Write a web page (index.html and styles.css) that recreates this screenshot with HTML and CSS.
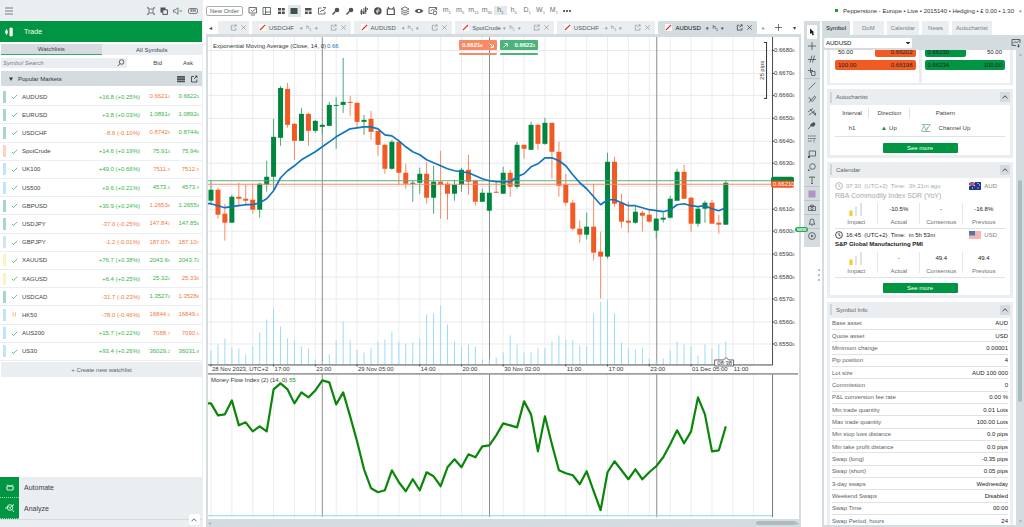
FILE: index.html
```html
<!DOCTYPE html>
<html lang="en">
<head>
<meta charset="utf-8">
<title>Trade</title>
<link rel="stylesheet" href="styles.css">
</head>
<body>
<svg class="defs" aria-hidden="true">
  <symbol id="check" viewBox="0 0 8 8"><path d="M1 4.500L3 6.300L7.200 2" class="st"/></symbol>
  <symbol id="pause" viewBox="0 0 8 8"><path d="M2.500 1.500v5M5 1.500v5" class="st"/></symbol>
  <symbol id="popout" viewBox="0 0 8 8"><path d="M4 1.500H1.500V7H6.800V4.500M5 1h2v2M7 1L4 4" class="st"/></symbol>
  <symbol id="close" viewBox="0 0 8 8"><path d="M1.500 1.500L6.500 6.500M6.500 1.500L1.500 6.500" class="st"/></symbol>
  <symbol id="noline" viewBox="0 0 8 8"><rect width="8" height="8" fill="#fff"/><path d="M1 7L7 1" stroke="#e8321e" stroke-width="1.600"/></symbol>
  <symbol id="up" viewBox="0 0 8 8"><path d="M1.500 5.200L4 2.800L6.500 5.200" class="st"/></symbol>
  <symbol id="clock" viewBox="0 0 8 8"><circle cx="4" cy="4" r="3.400" class="st"/><path d="M4 2v2.200L5.600 5" class="st"/></symbol>
  <symbol id="zoomglass" viewBox="0 0 10 10"><circle cx="6" cy="4" r="2.300" fill="currentColor"/><path d="M4.400 5.600L1.500 8.500" stroke="currentColor" stroke-width="1.400"/></symbol>
  <symbol id="impact" viewBox="0 0 14 14"><path d="M.500 8.500h3V14h-3z" fill="#fbc81e"/><path d="M6 4.500h2V14H6zM11 1h2v13h-2z" fill="#dfe2e4"/></symbol>
</svg>
<div class="app">
  <aside class="sidebar">
    <header class="side-head">
      <button class="icon-btn" aria-label="Menu"><svg class="i10" viewBox="0 0 10 10"><path d="M1 2h8M1 5h8M1 8h8" class="st"/></svg></button>
      <span class="grow"></span>
      <button class="icon-btn" aria-label="Fullscreen"><svg class="i8" viewBox="0 0 8 8"><path d="M2 2h4v4H2zM.500 .500L2 2M7.500 .500L6 2M.500 7.500L2 6M7.500 7.500L6 6M0 2V0h2M6 0h2v2M0 6v2h2M6 8h2V6" class="st"/></svg></button>
      <button class="icon-btn" aria-label="Windows"><svg class="i8" viewBox="0 0 8 8"><path d="M.500 .500h5v5h-5z" fill="#4a5254"/><path d="M2.800 2.800h4.600v4.600H2.800z" fill="#eceff1" stroke="#4a5254"/></svg></button>
      <button class="icon-btn" aria-label="Sound"><svg class="i10" viewBox="0 0 10 8"><path d="M.500 3H2L5 .800V7.200L2 5H.500z" class="st"/><path d="M6.500 3h2.500v2H6.500z" fill="#7fcf9c"/></svg></button>
      <button class="lang">EN</button>
    </header>
    <div class="trade"><svg class="i10" viewBox="0 0 10 10"><path d="M2.500 2v6M7 0v10" stroke="#fff" stroke-width=".800"/><path d="M1.200 3.500h2.600v3H1.200zM5.500 1h3.200v8H5.500z" fill="#fff"/></svg><span>Trade</span></div>
    <div class="seg"><button class="on">Watchlists</button><button>All Symbols</button></div>
    <div class="search-row">
      <label class="search"><input type="text" placeholder="Symbol Search" aria-label="Symbol Search"><svg class="i8" viewBox="0 0 8 8"><circle cx="4.600" cy="3" r="2.300" class="st"/><path d="M3 4.600L.800 7.200" class="st"/></svg></label>
      <span class="bid">Bid</span><span class="ask">Ask</span>
    </div>
    <div class="group"><svg class="tri" viewBox="0 0 4 4"><path d="M0 .500h4L2 4z" fill="currentColor"/></svg><span>Popular Markets</span><span class="grow"></span>
      <svg class="i8" viewBox="0 0 8 8"><path d="M0 1h8v1.700H0zM0 3.300h8V5H0zM0 5.600h8v1.700H0z" fill="#4a5254"/></svg>
      <svg class="i8"><use href="#popout"/></svg></div>
    <ul class="symbols">
      <li><i class="bar fx"></i><svg class="ok"><use href="#check"/></svg><b>AUDUSD</b><span class="chg u">+16.8 (+0.25%)</span><span class="q d">0.6621<small>0</small></span><span class="q u">0.6622<small>3</small></span></li>
      <li><i class="bar fx"></i><svg class="ok"><use href="#check"/></svg><b>EURUSD</b><span class="chg u">+3.8 (+0.03%)</span><span class="q u">1.0891<small>4</small></span><span class="q u">1.0892<small>6</small></span></li>
      <li><i class="bar fx"></i><svg class="ok"><use href="#check"/></svg><b>USDCHF</b><span class="chg d">-8.6 (-0.10%)</span><span class="q d">0.8742<small>9</small></span><span class="q u">0.8744<small>4</small></span></li>
      <li><i class="bar oil"></i><svg class="ok"><use href="#check"/></svg><b>SpotCrude</b><span class="chg u">+14.6 (+0.19%)</span><span class="q u">75.91<small>3</small></span><span class="q u">75.94<small>3</small></span></li>
      <li><i class="bar idx"></i><svg class="ok"><use href="#check"/></svg><b>UK100</b><span class="chg u">+49.0 (+0.66%)</span><span class="q d">7511.<small>9</small></span><span class="q d">7512.<small>9</small></span></li>
      <li><i class="bar idx"></i><svg class="ok"><use href="#check"/></svg><b>US500</b><span class="chg u">+9.6 (+0.21%)</span><span class="q u">4573.<small>5</small></span><span class="q u">4573.<small>9</small></span></li>
      <li><i class="bar fx"></i><svg class="ok"><use href="#check"/></svg><b>GBPUSD</b><span class="chg u">+30.9 (+0.24%)</span><span class="q d">1.2653<small>6</small></span><span class="q u">1.2655<small>3</small></span></li>
      <li><i class="bar fx"></i><svg class="ok"><use href="#check"/></svg><b>USDJPY</b><span class="chg d">-37.0 (-0.25%)</span><span class="q d">147.84<small>1</small></span><span class="q u">147.85<small>6</small></span></li>
      <li><i class="bar cross"></i><svg class="ok"><use href="#check"/></svg><b>GBPJPY</b><span class="chg d">-1.2 (-0.01%)</span><span class="q d">187.07<small>8</small></span><span class="q d">187.10<small>7</small></span></li>
      <li><i class="bar metal"></i><svg class="ok"><use href="#check"/></svg><b>XAUUSD</b><span class="chg u">+76.7 (+0.38%)</span><span class="q u">2043.6<small>9</small></span><span class="q u">2043.7<small>4</small></span></li>
      <li><i class="bar metal"></i><svg class="ok"><use href="#check"/></svg><b>XAGUSD</b><span class="chg u">+6.4 (+0.25%)</span><span class="q u">25.32<small>2</small></span><span class="q d">25.33<small>8</small></span></li>
      <li><i class="bar fx"></i><svg class="ok"><use href="#check"/></svg><b>USDCAD</b><span class="chg d">-31.7 (-0.23%)</span><span class="q u">1.3527<small>0</small></span><span class="q d">1.3528<small>8</small></span></li>
      <li><i class="bar idx"></i><svg class="ok wait"><use href="#pause"/></svg><b>HK50</b><span class="chg d">-78.0 (-0.46%)</span><span class="q d">16844.<small>5</small></span><span class="q d">16849.<small>5</small></span></li>
      <li><i class="bar idx"></i><svg class="ok"><use href="#check"/></svg><b>AUS200</b><span class="chg u">+15.7 (+0.22%)</span><span class="q d">7088.<small>7</small></span><span class="q d">7090.<small>5</small></span></li>
      <li><i class="bar idx"></i><svg class="ok"><use href="#check"/></svg><b>US30</b><span class="chg u">+93.4 (+0.26%)</span><span class="q u">36029.<small>2</small></span><span class="q u">36031.<small>8</small></span></li>
    </ul>
    <button class="create">+ Create new watchlist</button>
    <nav class="side-nav">
      <a href="#automate"><span class="sq"><svg class="i8" viewBox="0 0 8 8"><path d="M1 1.500L2.500 3h3L7 1.500M1 3h6v4H1zM0 4v2M8 4v2" class="st"/></svg></span>Automate</a>
      <a href="#analyze"><span class="sq"><svg class="i10" viewBox="0 0 10 10"><circle cx="5" cy="4.500" r="2.800" class="st"/><path d="M7 6.500L9 9M0 5h1.500L3.500 3.500 5 5.500 6.500 3 9 1.500" class="st"/></svg></span>Analyze</a>
      <div class="nav-tail"><button class="collapse" aria-label="Expand"><svg class="i8"><use href="#up"/></svg></button></div>
    </nav>
  </aside>

  <div class="main">
    <header class="topbar">
      <button class="new-order">New Order</button>
      <div class="tools">
        <button aria-label="Monitor"><svg class="i10" viewBox="0 0 10 10"><path d="M1 1.500h7.500v5.500H1zM3 9h4M3 4l1.500 1.500L8 2.500" class="st"/></svg></button>
        <button aria-label="Panels"><svg class="i10" viewBox="0 0 10 10"><path d="M1 1.500h7.500v7H1zM3.500 1.500v7M3.500 6h5" class="st"/></svg></button>
        <button aria-label="Grid"><svg class="i10" viewBox="0 0 10 10"><path d="M2 2h3v2.500H2zM5.800 2h3v2.500h-3zM2 5.500h3V8H2zM5.800 5.500h3V8h-3z" fill="currentColor"/></svg></button>
        <button class="on" aria-label="Single"><svg class="i10" viewBox="0 0 10 10"><path d="M1.500 2h7v6h-7z" fill="#3f5148"/></svg></button>
        <button aria-label="Mixed grid"><svg class="i10" viewBox="0 0 10 10"><path d="M2 2h6.500v2.500H2zM2 5.500h2.800V8H2zM5.800 5.500h2.800V8H5.800z" fill="currentColor"/></svg></button>
        <button aria-label="Link charts"><svg class="i10" viewBox="0 0 10 10"><path d="M4.500 2H1.500v6H8V5.500M3 6l2-2 1 1L8.500 2M6 1.500h3" class="st"/></svg></button>
        <button aria-label="Zoom in"><svg class="i10"><use href="#zoomglass"/></svg></button>
        <button aria-label="Zoom out"><svg class="i10"><use href="#zoomglass"/></svg></button>
        <button aria-label="Chart type"><svg class="i10" viewBox="0 0 10 10"><path d="M1.500 4.500h2V8h-2zM4 5.500h1.500V8H4zM5.800 1.500h1.700V6H5.800z" fill="currentColor"/><path d="M2.500 3v6M4.800 2v6M6.600 .500V8M8.500 2v2" class="st"/></svg></button>
        <button aria-label="Indicators"><svg class="i10" viewBox="0 0 10 10"><circle cx="4.800" cy="5" r="3.800" fill="currentColor"/><path d="M5 7.500c-2-1-1-4 1-4.500M3.500 5h3" stroke="#fff" fill="none"/></svg></button>
        <button aria-label="Robots"><svg class="i10" viewBox="0 0 10 10"><path d="M2 1L3.500 3h3L8 1M1.300 3h7v5.500h-7z" class="st thick"/></svg></button>
        <button aria-label="Layers"><svg class="i10" viewBox="0 0 10 10"><path d="M5 .800L9 3 5 5 1 3zM1 5l4 2 4-2M1 7l4 2 4-2" class="st"/></svg></button>
        <button aria-label="View"><svg class="i10" viewBox="0 0 10 10"><path d="M.500 5Q5 .500 9.500 5 5 9.500.500 5z" fill="currentColor"/><circle cx="5" cy="5" r="1.300" fill="#fff"/></svg></button>
        <button aria-label="Chart settings"><svg class="i10" viewBox="0 0 10 10"><path d="M8.500 4V1.500H1v6h3.500M2.500 5l2-1.500L6 4.500l2.500-3" class="st"/><circle cx="7" cy="7" r="1.800" class="st"/></svg></button>
      </div>
      <div class="frames">
        <button>m<sub>1</sub></button><button>m<sub>5</sub></button><button>m<sub>15</sub></button><button>m<sub>30</sub></button><button class="on">h<sub>1</sub></button><button>h<sub>4</sub></button><button>D<sub>1</sub></button><button>W<sub>1</sub></button><button>M<sub>1</sub></button><button class="dots" aria-label="More"><svg viewBox="0 0 8 2"><circle cx="1" cy="1" r="1"/><circle cx="4" cy="1" r="1"/><circle cx="7" cy="1" r="1"/></svg></button>
      </div>
      <span class="grow"></span>
      <div class="account"><i></i><span>Pepperstone - Europe • Live • 2015140 • Hedging • £ 0.00 • 1:30</span><em>▾</em></div>
    </header>

    <div class="body">
      <section class="center">
        <div class="tabs">
          <button class="nav-arrow" aria-label="Previous tabs">◂</button>
          <div class="tab part"><svg class="i7"><use href="#popout"/></svg><svg class="i7"><use href="#close"/></svg></div>
          <div class="tab-grid">
            <div class="tab"><svg class="i7"><use href="#noline"/></svg><span class="nm">USDCHF</span><em>▾</em><span class="tf">h<sub>1</sub></span><em>▾</em><span class="grow"></span><svg class="i7"><use href="#popout"/></svg><svg class="i7"><use href="#close"/></svg></div>
            <div class="tab"><svg class="i7"><use href="#noline"/></svg><span class="nm">AUDUSD</span><em>▾</em><span class="tf">h<sub>1</sub></span><em>▾</em><span class="grow"></span><svg class="i7"><use href="#popout"/></svg><svg class="i7"><use href="#close"/></svg></div>
            <div class="tab"><svg class="i7"><use href="#noline"/></svg><span class="nm">SpotCrude</span><em>▾</em><span class="tf">h<sub>1</sub></span><em>▾</em><span class="grow"></span><svg class="i7"><use href="#popout"/></svg><svg class="i7"><use href="#close"/></svg></div>
            <div class="tab"><svg class="i7"><use href="#noline"/></svg><span class="nm">USDCHF</span><em>▾</em><span class="tf">h<sub>1</sub></span><em>▾</em><span class="grow"></span><svg class="i7"><use href="#popout"/></svg><svg class="i7"><use href="#close"/></svg></div>
            <div class="tab on"><svg class="i7"><use href="#noline"/></svg><span class="nm">AUDUSD</span><em>▾</em><span class="tf">h<sub>1</sub></span><em>▾</em><span class="grow"></span><svg class="i7"><use href="#popout"/></svg><svg class="i7"><use href="#close"/></svg></div>
          </div>
          <div class="tab-end"><span class="dim">▸</span><svg class="i7" viewBox="0 0 8 8"><path d="M4 0v8M0 4h8" class="st"/></svg><span>▾</span></div>
        </div>
        <div class="frame">
          <div class="chart">
            <svg id="chart" viewBox="208 37 592 482" preserveAspectRatio="xMinYMin meet" role="img" aria-label="AUDUSD h1 chart"></svg>
            <div class="quotes">
              <button class="sell"><span>0.6621<small>0</small></span><svg class="i6" viewBox="0 0 8 8"><path d="M1 1L6 6M7 2.500V7H2.500" stroke="#fff" stroke-width="1.600" fill="none"/></svg></button>
              <button class="buy"><svg class="i6" viewBox="0 0 8 8"><path d="M1 7L6 2M2.500 1H7V5.500" stroke="#fff" stroke-width="1.600" fill="none"/></svg><span>0.6622<small>3</small></span></button>
              <i class="sell-bar"></i><i class="buy-bar"></i>
            </div>
          </div>
          <div class="hscroll"><span>◂</span><span class="grow"></span><i></i><span>▸</span></div>
        </div>
      </section>

      <div class="rail">
        <div class="rail-tools">
          <button class="on" aria-label="Cursor"><svg class="i8" viewBox="0 0 8 8"><path d="M2 .500V6l1.400-1L4.600 7.500 6 6.800 4.800 4.500H6.500z" fill="#222"/></svg></button>
          <button aria-label="Crosshair"><svg class="i8" viewBox="0 0 8 8"><path d="M4 0v8M0 4h8" class="st"/></svg></button>
          <button aria-label="Crosshair lines"><svg class="i8" viewBox="0 0 8 8"><path d="M0 4.500h8M2 7.500L4 .500M4.500 7.500L6.500 .500" class="st"/></svg></button>
          <button aria-label="Measure"><svg class="i8" viewBox="0 0 8 8"><path d="M2.500 0v5M0 2.500h5M3.500 3.500h3.500v4H3.500z" class="st"/></svg></button>
          <button class="sep" aria-label="Line"><svg class="i8" viewBox="0 0 8 8"><path d="M.500 7.500L7.500 .500" class="st"/></svg></button>
          <button aria-label="Pencil"><svg class="i8" viewBox="0 0 8 8"><path d="M.500 3Q2 2 2.500 4T1 7.500M3 5.500L6.500 1 7.800 2.200 4.500 6.500z" class="st"/></svg></button>
          <button aria-label="Fibonacci"><svg class="i8" viewBox="0 0 8 8"><path d="M0 4L5 .500M1 7L7 2.500M2 1l5 6M5 5h2.500v2.500" class="st"/></svg></button>
          <button aria-label="Shapes"><svg class="i8" viewBox="0 0 8 8"><path d="M3.500 2.500L6 1 7.500 3 6 5.500H3L2 4z" class="fl"/><path d="M0 8L3 5" class="st"/></svg></button>
          <button class="tall" aria-label="Levels"><svg class="i8" viewBox="0 0 8 8"><path d="M0 1h8M0 3.500h8M0 6h4M6 4.500v3" class="st" stroke-dasharray="1.500 .600"/></svg></button>
          <button aria-label="Rectangle"><svg class="i8" viewBox="0 0 8 8"><path d="M1.200 1h6.300v5H1.200z" class="st"/><path d="M0 6h2v2H0z" class="fl"/></svg></button>
          <button aria-label="Ellipse"><svg class="i8" viewBox="0 0 8 8"><circle cx="4.500" cy="3.500" r="2.800" class="st"/><path d="M0 6.500h1.500V8H0z" class="fl"/></svg></button>
          <button aria-label="Text"><svg class="i8" viewBox="0 0 8 8"><path d="M1.500 2V1h5v1M4 1v6.500M3 7.500h2" class="st"/></svg></button>
          <button class="sep" aria-label="Colour"><svg class="i8" viewBox="0 0 8 8"><path d="M.500 .500h7v7h-7z" fill="#b094c4"/></svg></button>
          <button class="sep" aria-label="Snapshot"><svg class="i8" viewBox="0 0 8 8"><path d="M.500 2.500h7v4h-7zM2.500 2.500V1.200h3v1.300" class="st"/><circle cx="4" cy="4.500" r="1.200" class="st"/></svg></button>
          <button class="sep" aria-label="Alerts"><svg class="i8" viewBox="0 0 8 8"><path d="M1 6.200h6L6 5V3Q6 1 4 1T2 3v2zM3.300 7.300h1.400" class="st"/></svg></button>
          <button class="sep" aria-label="Replay"><svg class="i8" viewBox="0 0 8 8"><circle cx="4" cy="4" r="3.400" class="st"/><path d="M3.200 2.500L5.600 4 3.200 5.500z" class="fl"/></svg><span class="new">NEW</span></button>
        </div>
        <div class="grip"><i></i><i></i><i></i></div>
      </div>

      <aside class="panel">
        <div class="ptabs"><button class="on">Symbol</button><button>DoM</button><button>Calendar</button><button>News</button><button>Autochartist</button></div>
        <div class="pbody">
          <div class="picker"><select aria-label="Symbol"><option>AUDUSD</option></select><span class="grow"></span><svg class="i10" viewBox="0 0 10 10"><path d="M1 1.500h8V5M1 1.500v6h4M2 5.500l2-2L5.500 5 8 2.500M7.500 6v3M6.200 7.800L7.500 9 8.800 7.800" class="st"/></svg></div>
          <div class="scroller">
            <div class="cards">
              <section class="card depth">
                <div class="side sell-side"><p class="half"><span>50.00</span><span class="fill">0.66202</span></p><p class="full"><span>100.00</span><span>0.66198</span></p></div>
                <div class="side buy-side"><p class="half"><span class="fill">0.66230</span><span>50.00</span></p><p class="full"><span>0.66234</span><span>100.00</span></p></div>
              </section>
              <section class="card">
                <h2>Autochartist<button aria-label="Collapse"><svg class="i8"><use href="#up"/></svg></button></h2>
                <div class="inner">
                  <table class="auto">
                    <thead><tr><th>Interval</th><th>Direction</th><th>Pattern</th></tr></thead>
                    <tbody><tr><td>h1</td><td><svg class="tri-up" viewBox="0 0 4 4"><path d="M0 4h4L2 .500z" fill="currentColor"/></svg>Up</td><td><svg class="pat" viewBox="0 0 10 8"><path d="M.500 .500h9M.500 7.500h9" stroke="#7cc98f"/><path d="M.500 7L3 1.500 5 6.500 9 1M5 6.500L7 3" class="st"/></svg>Channel Up</td></tr></tbody>
                  </table>
                  <button class="more">See more</button>
                </div>
              </section>
              <section class="card cal">
                <h2>Calendar<button aria-label="Collapse"><svg class="i8"><use href="#up"/></svg></button></h2>
                <div class="inner">
                  <article class="event past">
                    <p class="when"><svg class="i8"><use href="#clock"/></svg><span>07:30 &nbsp;(UTC+2)&nbsp; Time: &nbsp;3h 21m ago</span><span class="grow"></span><svg class="flag" viewBox="0 0 12 8"><path d="M0 0h12v8H0z" fill="#233a8c"/><path d="M0 0l6 4M6 0L0 4" stroke="#fff"/><path d="M3 0v4M0 2h6" stroke="#e0303a" stroke-width="1.200"/><path d="M8.500 1.500h1M10 3h1M8.500 6h1M3 6h1" stroke="#fff"/></svg><span class="cur">AUD</span></p>
                    <p class="title">RBA Commodity Index SDR (YoY)</p>
                    <dl><div><dd><svg class="imp"><use href="#impact"/></svg></dd><dt>Impact</dt></div><div><dd>-10.5%</dd><dt>Actual</dt></div><div><dd>-</dd><dt>Consensus</dt></div><div><dd>-16.8%</dd><dt>Previous</dt></div></dl>
                  </article>
                  <article class="event">
                    <p class="when"><svg class="i8"><use href="#clock"/></svg><span>16:45 &nbsp;(UTC+2)&nbsp; Time: &nbsp;in 5h 53m</span><span class="grow"></span><svg class="flag" viewBox="0 0 12 8"><path d="M0 0h12v8H0z" fill="#fbe0de"/><path d="M0 1h12M0 3h12M0 5h12M0 7h12" stroke="#f08a86"/><path d="M0 0h6v4.500H0z" fill="#5573a8"/></svg><span class="cur">USD</span></p>
                    <p class="title">S&amp;P Global Manufacturing PMI</p>
                    <dl><div><dd><svg class="imp"><use href="#impact"/></svg></dd><dt>Impact</dt></div><div><dd>-</dd><dt>Actual</dt></div><div><dd>49.4</dd><dt>Consensus</dt></div><div><dd>49.4</dd><dt>Previous</dt></div></dl>
                  </article>
                  <button class="more">See more</button>
                </div>
              </section>
              <section class="card">
                <h2>Symbol Info<button aria-label="Collapse"><svg class="i8"><use href="#up"/></svg></button></h2>
                <ul class="inner info">
                  <li><span>Base asset</span><b>AUD</b></li>
                  <li><span>Quote asset</span><b>USD</b></li>
                  <li><span>Minimum change</span><b>0.00001</b></li>
                  <li><span>Pip position</span><b>4</b></li>
                  <li><span>Lot size</span><b>AUD 100 000</b></li>
                  <li><span>Commission</span><b>0</b></li>
                  <li><span>P&amp;L conversion fee rate</span><b>0.00 %</b></li>
                  <li><span>Min trade quantity</span><b>0.01 Lots</b></li>
                  <li><span>Max trade quantity</span><b>100.00 Lots</b></li>
                  <li><span>Min stop loss distance</span><b>0.0 pips</b></li>
                  <li><span>Min take profit distance</span><b>0.0 pips</b></li>
                  <li><span>Swap (long)</span><b>-0.35 pips</b></li>
                  <li><span>Swap (short)</span><b>0.05 pips</b></li>
                  <li><span>3-day swaps</span><b>Wednesday</b></li>
                  <li><span>Weekend Swaps</span><b>Disabled</b></li>
                  <li><span>Swap Time</span><b>00:00</b></li>
                  <li><span>Swap Period, hours</span><b>24</b></li>
                </ul>
              </section>
            </div>
            <div class="vscroll"><span>▴</span><i></i><span>▾</span></div>
          </div>
        </div>
      </aside>
    </div>
  </div>
</div>
<script src="chart.js"></script>
</body>
</html>
```
FILE: styles.css
```css
* { box-sizing: border-box; }
body { margin: 0; background: #fff; color: #3c4244; font: 6px/8px "Liberation Sans", Arial, sans-serif; overflow: hidden; }
button, input, select { font: inherit; color: inherit; margin: 0; padding: 0; border: 0; background: none; }
p, h2, ul, dl, dd { margin: 0; padding: 0; }
ul { list-style: none; }
a { color: inherit; text-decoration: none; }
em, i { font-style: normal; }
small { font-size: 4px; }
svg { display: block; flex: none; }
.st { fill: none; stroke: currentColor; stroke-width: .8; }
.thick { stroke-width: 1.2; }
.fl { fill: currentColor; }
.defs { position: absolute; width: 0; height: 0; }
.grow { flex: 1; }
.i6 { width: 5px; height: 5px; }
.i7 { width: 7px; height: 7px; }
.i8 { width: 8px; height: 8px; }
.i10 { width: 10px; height: 10px; }
.app { display: flex; height: 100vh; }

/* sidebar */
.sidebar { width: 202px; flex: none; display: flex; flex-direction: column; }
.side-head { height: 21px; flex: none; display: flex; align-items: center; gap: 5px; padding: 0 4px; background: #eaeef1; color: #5a6265; }
.lang { width: 10px; height: 6px; border: 1px solid #7b8386; border-radius: 2px; font-size: 4px; line-height: 4px; font-weight: bold; }
.trade { height: 21px; flex: none; display: flex; align-items: center; gap: 10px; padding-left: 4px; background: #009542; color: #fff; font-size: 7px; }
.seg { display: grid; grid-template-columns: 1fr 1fr; height: 11px; flex: none; margin: 2px 0 2px 1px; background: #eaeef1; }
.seg .on { background: #d4dcdf; border-bottom: 1px solid #3aa96a; }
.search-row { display: flex; align-items: center; height: 11px; flex: none; padding-left: 1px; }
.search { display: flex; align-items: center; width: 126px; height: 10px; padding: 0 2px; background: #eaeef1; }
.search input { flex: 1; min-width: 0; font-style: italic; }
.search input::placeholder { color: #777f82; }
.bid { width: 35px; text-align: right; }
.ask { width: 31px; text-align: right; }
.group { display: flex; align-items: center; gap: 5px; height: 15px; flex: none; margin: 3px 0 2px 1px; padding: 0 4px 0 8px; background: #d4dcdf; color: #2f3537; }
.tri { width: 4px; height: 4px; }
.symbols { display: grid; grid-auto-rows: 1fr; height: 273px; flex: none; }
.symbols li { display: grid; grid-template-columns: 8px 11px 40px 1fr 30px 29px; align-items: center; padding: 0 3px; border-bottom: 1px solid #eceff0; }
.symbols b { font-weight: normal; }
.bar { width: 3px; height: 12px; }
.fx { background: #a5d6cc; }
.oil { background: #ffd2bd; }
.idx { background: #bfe4fb; }
.cross { background: #d3e2f4; }
.metal { background: #fcf1bf; }
.ok { width: 7px; height: 7px; color: #1fa85a; }
.wait { color: #f5a03c; }
.chg, .q { text-align: right; }
.u { color: #39b54a; }
.d { color: #f47a3c; }
.create { height: 15px; flex: none; margin: 1px 0 0 1px; background: #eaeef1; color: #5a6265; }
.side-nav { margin-top: auto; background: #eaeef1; font-size: 7px; }
.side-nav a { display: flex; align-items: center; gap: 5px; height: 21px; }
.sq { display: flex; align-items: center; justify-content: center; width: 19px; height: 21px; background: #009542; color: #fff; border-bottom: 1px dotted #9fd7b6; }
.nav-tail { position: relative; height: 8px; border-top: 1px solid #d4dcdf; }
.collapse { position: absolute; right: 2px; top: -6px; width: 11px; height: 11px; padding: 1px; background: #fff; border-radius: 2px; }

/* top bar */
.main { flex: 1; min-width: 0; display: flex; flex-direction: column; padding-left: 3px; border-left: 1px solid #eef1f2; }
.topbar { display: flex; align-items: center; height: 21px; flex: none; }
.new-order { width: 37px; height: 10px; border: 1px solid #a9b0b3; border-radius: 2px; color: #5a6265; line-height: 8px; }
.tools { display: grid; grid-template-columns: repeat(14, 1fr); width: 194px; margin-left: 3px; color: #4a5254; }
.tools button { display: flex; align-items: center; justify-content: center; height: 12px; }
.tools .on { background: #dfe5e8; }
.frames { display: grid; grid-template-columns: repeat(10, 1fr); width: 134px; color: #6a7275; font-size: 7px; }
.frames .on { background: #e3e8ea; }
.frames .dots { display: flex; align-items: center; justify-content: center; }
.dots svg { width: 8px; height: 2px; fill: #2f3537; }
sub { font-size: 4px; line-height: 4px; vertical-align: -2px; }
.account { display: flex; align-items: center; gap: 5px; padding-right: 2px; color: #2f3537; }
.account i { width: 3px; height: 3px; background: #1c9a2e; }
.account em { font-size: 5px; color: #8a9295; }

/* chart area */
.body { flex: 1; min-height: 0; display: flex; }
.center { flex: 1; min-width: 0; display: flex; flex-direction: column; }
.tabs { display: flex; height: 13px; flex: none; padding-right: 2px; }
.nav-arrow { width: 9px; }
.tab { display: flex; align-items: center; gap: 3px; padding: 0 4px 0 7px; background: #eaeef1; color: #8a9295; border-radius: 1px; }
.tab.part { width: 31px; margin: 0 3px; padding-left: 12px; }
.tab-grid { flex: 1; display: grid; grid-template-columns: repeat(5, 1fr); gap: 3px; }
.tab .nm { width: 28px; color: #4f585b; }
.tab em { font-size: 5px; }
.tab.on { background: #d4dcdf; color: #2f3537; }
.tab.on .nm { color: #111; }
.tab-end { display: flex; align-items: center; justify-content: space-around; width: 44px; }
.dim { color: #9aa2a5; }
.frame { flex: 1; min-height: 0; display: flex; flex-direction: column; padding: 3px 2px 0; margin-right: 2px; background: #d4dcdf; }
.chart { position: relative; flex: 1; min-height: 0; background: #fff; overflow: hidden; }
.chart > svg { width: 100%; height: 100%; }
.chart text { font: 6px "Liberation Sans", Arial, sans-serif; fill: #33393b; }
.chart .sm { font-size: 4px; }
.chart .onfill { fill: #fff; }
.chart .ema-value { fill: #1479bd; }
.chart .flow-value { fill: #159a1c; }
.quotes { position: absolute; left: 251px; top: 3px; display: grid; grid-template-columns: 38px 38px; gap: 3px; color: #fff; font-weight: bold; }
.quotes button { display: flex; align-items: center; justify-content: space-between; height: 10px; padding: 0 3px; border-radius: 1px; }
.sell, .sell-bar { background: #f68b65; }
.buy, .buy-bar { background: #4bb37b; }
.sell-bar, .buy-bar { height: 2px; border-radius: 1px; }
.hscroll { display: flex; align-items: center; height: 8px; flex: none; color: #a9bac1; }
.hscroll i { width: 40px; height: 4px; border-radius: 2px; background: #abbcc3; }

/* drawing rail */
.rail { width: 19px; flex: none; }
.rail-tools { width: 16px; margin: 0 1px; padding: 4px 0 5px; background: #d4dcdf; color: #4a5254; display: grid; }
.rail-tools button { position: relative; display: flex; align-items: center; justify-content: center; height: 13px; }
.rail-tools .on { background: #fff; margin: 0 3px; height: 14px; }
.rail-tools .sep { border-top: 1px solid #bcc5c9; height: 14px; }
.rail-tools .tall { height: 16px; }
.new { position: absolute; left: -9px; top: -2px; padding: 0 2px; border-radius: 3px; background: #2aa84a; color: #fff; font-size: 4px; line-height: 5px; font-weight: bold; }
.grip { display: grid; gap: 3px; justify-content: end; padding: 22px 2px 0 0; }
.grip i { width: 2px; height: 2px; background: #b4bfc4; }

/* right panel */
.panel { width: 202px; flex: none; display: flex; flex-direction: column; }
.ptabs { display: flex; gap: 3px; height: 14px; flex: none; }
.ptabs button { padding: 0 4px; background: #eaeef1; color: #777f82; }
.ptabs .on { background: #d4dcdf; color: #111; }
.ptabs button:nth-child(2) { padding: 0 9px; }
.ptabs button:nth-child(4) { padding: 0 6px; }
.pbody { flex: 1; min-height: 0; display: flex; flex-direction: column; background: #d4dcdf; padding: 2px 0 2px 2px; }
.picker { display: flex; align-items: center; height: 11px; flex: none; padding-right: 3px; }
.picker select { width: 88px; height: 10px; padding: 0 2px; background: #fff; border-radius: 2px; color: #111; appearance: none; background-image: linear-gradient(45deg, transparent 50%, #333 50%), linear-gradient(-45deg, transparent 50%, #333 50%); background-size: 2px 3px; background-position: 82px 4px, 84px 4px; background-repeat: no-repeat; }
.scroller { flex: 1; min-height: 0; display: flex; margin-top: 2px; background: #fff; }
.cards { flex: 1; min-width: 0; overflow: hidden; display: flex; flex-direction: column; gap: 4px; padding: 0 3px; }
.card { flex: none; background: #eaeef1; padding: 0 3px 3px; }
.card h2 { display: flex; align-items: center; justify-content: space-between; height: 16px; font-size: 6px; font-weight: normal; color: #5a6265; padding-left: 5px; }
.card h2::before { content: ""; width: 2px; height: 11px; margin: 0 4px 0 -5px; background: #cfd7da; }
.card h2 button { width: 10px; height: 10px; padding: 1px; background: #d4dcdf; margin-left: auto; color: #222; }
.inner { background: #fff; padding: 0 5px; }
.depth { display: grid; grid-template-columns: 1fr 1fr; gap: 3px; height: 35px; overflow: hidden; padding-bottom: 2px; color: #222; }
.side { display: flex; flex-direction: column; justify-content: flex-end; gap: 3px; height: 33px; padding: 0 3px 13px 5px; background: #fff; }
.buy-side { padding: 0 5px 13px 3px; }
.side p { display: flex; align-items: center; justify-content: space-between; height: 10px; flex: none; padding: 0 3px; border-radius: 2px; }
.fill { height: 10px; line-height: 10px; width: 41px; border-radius: 2px; padding: 0 3px; }
.sell-side .half { padding-right: 0; }
.buy-side .half { padding-left: 0; }
.sell-side .fill { text-align: right; background: #f15a22; }
.sell-side .full { background: #f15a22; }
.buy-side .fill, .buy-side .full { background: #009542; }
.auto { width: 100%; border-collapse: collapse; text-align: center; border-bottom: 1px solid #dfe3e5; }
.auto th { font-weight: normal; height: 15px; padding: 0; background: linear-gradient(#dfe3e5, #dfe3e5) right center / 1px 10px no-repeat; }
.auto th:last-child { background: none; }
.auto td { height: 16px; padding: 0; }
.auto th:first-child { width: 20%; }
.auto th:nth-child(2) { width: 24%; }
.auto th:last-child, .auto td:last-child { padding-right: 24px; }
.tri-up { display: inline-block; width: 4px; height: 4px; margin-right: 3px; color: #1c9a2e; }
.pat { display: inline-block; width: 10px; height: 8px; margin-right: 8px; vertical-align: middle; color: #9aa2a5; }
.more { display: block; width: 75px; height: 10px; margin: 6px auto 0; background: #009542; color: #fff; border-radius: 1px; }
.inner:has(.more) { padding-bottom: 2px; }
.event { padding-top: 2px; border-bottom: 1px solid #dfe3e5; }
.event.past { padding-top: 4px; }
.cal .more { margin-top: 5px; }
.when { display: flex; align-items: center; gap: 3px; height: 9px; padding-right: 8px; color: #222; }
.cur { color: #777f82; }
.flag { width: 12px; height: 8px; }
.title { line-height: 9px; font-weight: bold; color: #222; }
.past .when, .past .title { color: #a3aaad; font-weight: normal; }
.past .cur { color: #777f82; }
.past .title { font-size: 7px; }
.event dl { display: grid; grid-template-columns: repeat(4, 1fr); text-align: center; padding: 1px 0 1px; }
.event dl div { display: flex; flex-direction: column; background: linear-gradient(#e3e7e9, #e3e7e9) right center / 1px 21px no-repeat; }
.event dl div:last-child { background: none; }
.event dd { display: flex; align-items: center; justify-content: center; height: 16px; color: #222; }
.event dt { line-height: 10px; color: #6a7275; }
.imp { width: 14px; height: 14px; }
.info { display: grid; grid-auto-rows: 1fr; height: 210px; padding: 0 2px; }
.info li { display: flex; align-items: center; justify-content: space-between; border-bottom: 1px solid #dfe3e5; color: #5a6265; }
.info b { font-weight: normal; color: #222; }
.vscroll { width: 8px; flex: none; display: flex; flex-direction: column; align-items: center; background: #d4dcdf; color: #a9bac1; }
.vscroll i { width: 4px; height: 222px; margin: 122px 0 auto; border-radius: 2px; background: #abbcc3; }
```
FILE: chart.js
```js
// colour, body top, body bottom, wick top, wick bottom
const candles = `g 190 201 181 205,r 190 215 188 219,r 214 223 204 241,g 197 223 195 223,r 197 199 183 206,r 199 201 185 206,r 200 210 184 214,g 184 210 183 218,g 177 185 161 192,g 137 177 119 190,g 88 138 86 146,r 89 125 83 128,r 124 141 123 160,g 114 141 108 141,r 114 131 113 146,g 121 131 120 133,g 125 127 124 134,g 105 126 102 126,g 105 106 97 149,g 102 105 58 113,r 102 103 96 116,r 103 122 102 128,g 120 122 115 135,r 119 132 111 140,r 131 145 131 156,r 145 169 144 174,g 142 169 140 170,r 142 173 140 185,r 173 184 164 189,g 183 184 181 202,g 174 183 168 194,r 174 198 162 204,g 182 198 166 214,r 182 185 151 219,r 184 194 182 220,g 185 194 180 201,g 170 185 168 192,r 170 182 155 195,r 181 202 180 206,g 193 202 189 202,g 193 211 182 212,r 192 193 182 193,g 173 194 167 194,r 173 187 170 197,g 145 187 142 189,r 145 149 145 159,g 125 150 122 150,r 125 144 124 150,g 123 144 118 145,r 123 152 123 179,r 152 186 142 197,r 185 203 174 206,r 203 229 200 231,r 229 235 221 243,g 227 235 213 240,r 227 253 184 261,r 252 257 232 299,g 162 257 153 259,r 162 204 157 207,r 203 222 194 228,r 221 223 202 233,g 212 223 207 224,r 213 216 211 232,r 215 222 210 223,g 219 231 218 239,g 218 220 213 223,g 199 218 196 219,g 172 201 169 201,r 172 199 165 199,r 198 224 197 232,g 209 224 207 227,g 203 209 201 223,r 203 224 200 224,r 223 225 215 234,g 183 225 181 225`.split(',').map(c => c.split(' '));
const ema = [204,206,208,207,206,205,205,203,199,191,178,171,166,160,156,152,147,142,137,133,129,128,127,127,129,135,136,141,147,152,155,160,163,166,169,171,172,173,176,179,181,182,182,182,177,174,167,164,158,158,161,166,175,183,189,197,205,200,200,203,206,206,208,210,211,212,210,205,204,206,207,206,209,211,208];
const volume = [351,345,339,348,349,355,347,333,320,309,327,339,341,347,349,360,362,355,341,322,341,350,353,349,342,340,332,342,344,343,339,315,314,306,325,342,347,345,347,360,360,358,353,336,345,353,353,349,349,342,336,340,341,346,347,314,302,300,314,343,349,350,348,359,362,359,351,342,345,347,356,345,349,345,342];
const flow = [404,416,415,401,426,423,432,427,432,390,384,390,404,393,398,391,381,383,405,393,417,442,470,489,493,491,471,483,492,480,491,473,477,487,468,460,468,455,458,447,446,436,424,426,428,402,415,452,417,445,471,474,476,485,472,492,511,473,462,471,480,470,480,473,467,458,445,431,444,432,398,415,452,451,427];
const step = 6.969;
const x = i => +(211 + i * step).toFixed(1);
const out = [];
const line = (x1, y1, x2, y2, c, w = 1) => out.push(`<path d="M${x1} ${y1}L${x2} ${y2}" stroke="${c}" stroke-width="${w}" fill="none"/>`);
const text = (tx, ty, s, attr = '') => out.push(`<text x="${tx}" y="${ty}" ${attr}>${s}</text>`);
const priceY = k => Math.round(50 + k * 22.65) + 0.5;

for (let i = 0; i < 81; i += 3) {
  line(x(i), 37, x(i), 365, '#ececec');
  line(x(i), 375, x(i), 518, '#ececec');
}
for (let k = 0; k < 14; k++) line(208, priceY(k), 773, priceY(k), '#eaeaea');
[322.5, 490, 657.5].forEach(v => { line(v, 37, v, 365, '#8c8c8c'); line(v, 375, v, 518, '#8c8c8c'); });
volume.forEach((v, i) => line(x(i), v, x(i), 365, '#9adcf8'));
candles.forEach(([k, t, b, h, l], i) => {
  line(x(i), h, x(i), l, k === 'g' ? '#4aa876' : '#f68a66');
  out.push(`<rect x="${(x(i) - 2.5).toFixed(1)}" y="${t}" width="5" height="${b - t}" fill="${k === 'g' ? '#00853e' : '#f15a24'}"/>`);
});
line(208, 181, 773, 181, '#5cae82');
line(208, 184.5, 773, 184.5, '#f68a66');
const poly = (a, c, w) => out.push(`<polyline points="208,${a[0]} ${a.map((v, i) => x(i) + ',' + v).join(' ')}" fill="none" stroke="${c}" stroke-width="${w}" stroke-linejoin="round"/>`);
poly(ema, '#0f75bd', 1.7);
line(208, 516.5, 773, 516.5, '#8fd4f5');
poly(flow, '#0a860a', 2.2);
line(208, 365.5, 773, 365.5, '#4a4a4a');
line(208, 374.5, 799, 374.5, '#555555');
line(773.5, 37, 773.5, 366, '#4a4a4a');
line(773.5, 375, 773.5, 518, '#777777');
for (let k = 0; k < 14; k++) {
  line(773, priceY(k), 775, priceY(k), '#4a4a4a');
  // the 0.6620 label lies under the bid and ask tags
  if (k !== 6) text(775, priceY(k) + 2, `0.6${680 - k * 10}<tspan class="sm">0</tspan>`);
}
out.push('<rect x="772" y="177" width="23" height="7" rx="2" fill="#00853e"/><rect x="772" y="181" width="23" height="7" rx="2" fill="#f15a24"/>');
text(774, 186, '0.66210', 'class="onfill"');
[[0, '28 Nov 2023, UTC+2'], [9, '17:00'], [15, '23:00'], [21, '29 Nov 05:00'], [30, '14:00'], [36, '20:00'], [42, '30 Nov 02:00'], [51, '11:00'], [57, '17:00'], [63, '23:00'], [69, '01 Dec 05:00'], [75, '11:00']].forEach(([i, s]) => {
  line(x(i), 365, x(i), 367, '#4a4a4a');
  text(x(i) + 1, 372, s);
});
out.push('<path d="M715.500 360.500h9l2.500-2.500 2.500 2.500h5v6h-19z" fill="#fff" stroke="#666"/>');
text(718, 366, '08:38');
text(213, 48, 'Exponential Moving Average (Close, 14, 0)<tspan class="ema-value" dx="1">0.66</tspan>');
text(211, 383, 'Money Flow Index (2) (14, 0)<tspan class="flow-value" dx="2">55</tspan>');
line(767.5, 42, 767.5, 99, '#333');
line(765, 42.5, 768, 42.5, '#333');
line(765, 98.5, 768, 98.5, '#333');
text(0, 0, '25 pips', 'transform="translate(765 80) rotate(-90)"');
document.getElementById('chart').innerHTML = out.join('');
```
